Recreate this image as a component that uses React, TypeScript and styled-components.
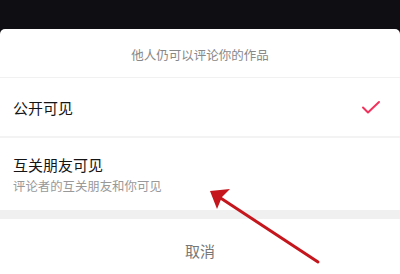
import styled, { createGlobalStyle } from "styled-components";

const GlobalStyle = createGlobalStyle`
  html, body {
    margin: 0;
    padding: 0;
  }
  body {
    font-family: "Noto Sans CJK SC", "Noto Sans", sans-serif;
    background: #0e0e13;
  }
`;

interface Option {
  title: string;
  desc?: string;
  checked?: boolean;
}

const options: Option[] = [
  { title: "公开可见", checked: true },
  { title: "互关朋友可见", desc: "评论者的互关朋友和你可见" },
];

export default function App() {
  return (
    <Page>
      <GlobalStyle />
      <TopBar />
      <Sheet>
        <Header>他人仍可以评论你的作品</Header>
        {options.map((opt, idx) => (
          <Row key={idx} $tall={!!opt.desc} $last={idx === options.length - 1}>
            <div className="text">
              <RowTitle>{opt.title}</RowTitle>
              {opt.desc && <RowDesc>{opt.desc}</RowDesc>}
            </div>
            {opt.checked && (
              <svg width="20" height="16" viewBox="0 0 20 16">
                <path
                  d="M2 7.5 L7 12.5 L18 2"
                  fill="none"
                  stroke="#f2325c"
                  strokeWidth="2"
                  strokeLinecap="round"
                  strokeLinejoin="round"
                />
              </svg>
            )}
          </Row>
        ))}
        <Gap />
        <Cancel>取消</Cancel>
      </Sheet>
      <Arrow viewBox="0 0 400 274" width="400" height="274">
        <line
          x1="318"
          y1="262"
          x2="219"
          y2="197"
          stroke="#c4161c"
          strokeWidth="3"
          strokeLinecap="round"
        />
        <polygon points="210,191 230,189 222,197 217,209" fill="#c4161c" />
      </Arrow>
    </Page>
  );
}

const Page = styled.div`
  position: relative;
  width: 400px;
  height: 274px;
  overflow: hidden;
  display: flex;
  flex-direction: column;
`;

const TopBar = styled.div`
  height: 29px;
  flex-shrink: 0;
  background: #0e0e13;
`;

const Sheet = styled.div`
  flex: 1;
  background: #ffffff;
  border-radius: 5px 5px 0 0;
  display: flex;
  flex-direction: column;
`;

const Header = styled.div`
  height: 49px;
  border-bottom: 1px solid #f1f1f1;
  display: flex;
  align-items: center;
  justify-content: center;
  padding-top: 2px;
  box-sizing: border-box;
  font-size: 12.5px;
  color: #888888;
`;

const Row = styled.div<{ $tall: boolean; $last: boolean }>`
  height: ${(props) => (props.$tall ? "72px" : "60px")};
  box-sizing: border-box;
  border-bottom: ${(props) => (props.$last ? "none" : "2px solid #f3f3f3")};
  display: flex;
  align-items: ${(props) => (props.$tall ? "flex-start" : "center")};
  justify-content: space-between;
  padding: ${(props) => (props.$tall ? "17px 20px 0 13px" : "2px 19px 0 13px")};
  .text {
    display: flex;
    flex-direction: column;
  }
`;

const RowTitle = styled.div`
  font-size: 15px;
  line-height: 20px;
  color: #151515;
`;

const RowDesc = styled.div`
  margin-top: 3px;
  font-size: 12.4px;
  line-height: 16px;
  color: #999999;
`;

const Gap = styled.div`
  height: 9px;
  background: #f0f0f0;
  flex-shrink: 0;
`;

const Cancel = styled.div`
  flex: 1;
  display: flex;
  align-items: center;
  justify-content: center;
  padding-top: 8px;
  font-size: 15px;
  color: #777777;
`;

const Arrow = styled.svg`
  position: absolute;
  left: 0;
  top: 0;
  pointer-events: none;
`;
